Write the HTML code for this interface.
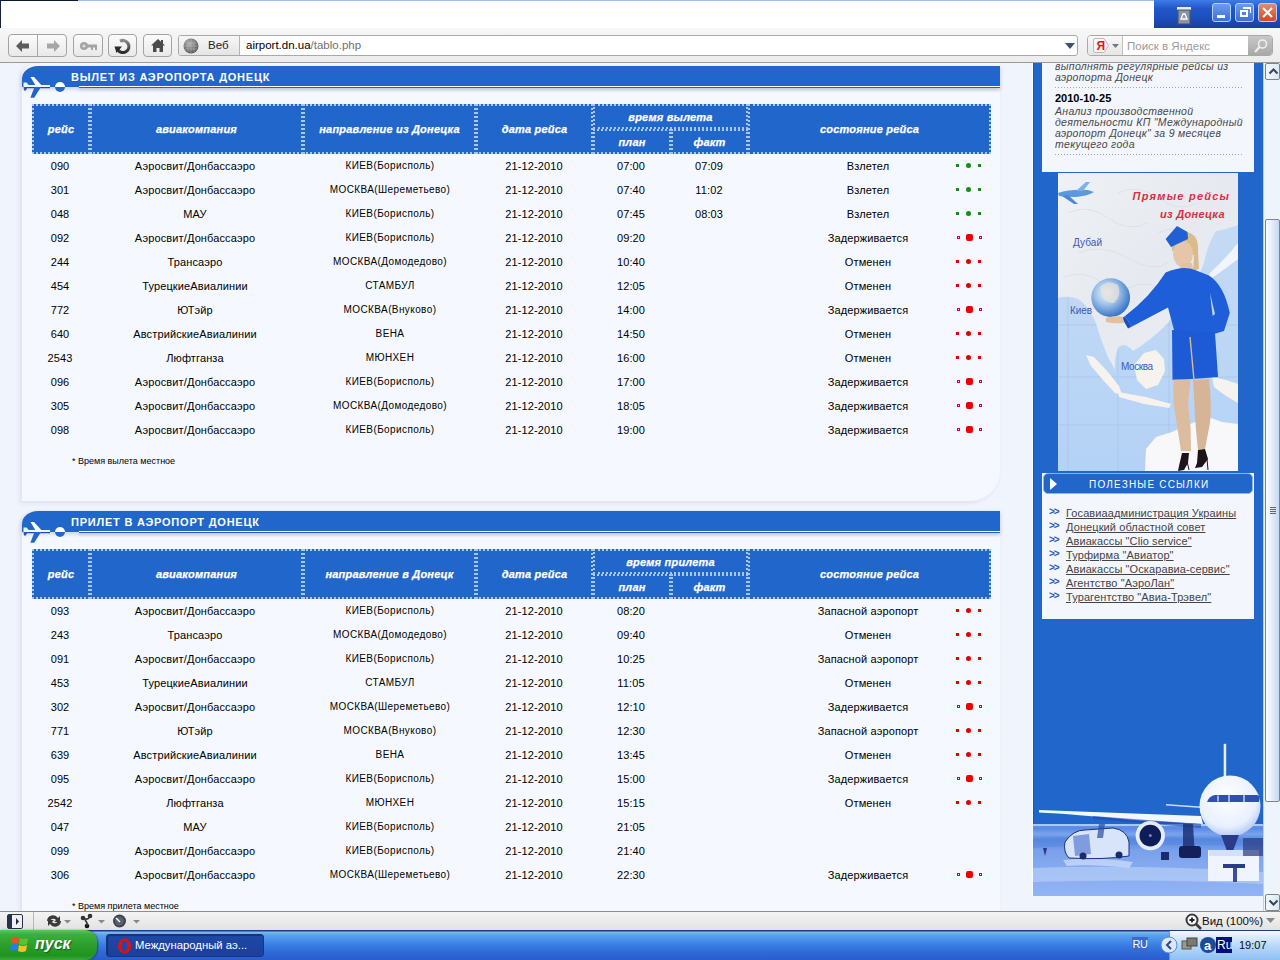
<!DOCTYPE html>
<html><head><meta charset="utf-8"><title>tablo</title><style>
*{margin:0;padding:0;box-sizing:border-box}
html,body{width:1280px;height:960px;overflow:hidden;background:#fff;font-family:"Liberation Sans",sans-serif;position:relative}
.abs{position:absolute}
/* title area */
#titlebar{position:absolute;left:0;top:0;width:1280px;height:28px;background:#fff}
#toolbar{position:absolute;left:0;top:28px;width:1280px;height:35px;background:linear-gradient(#f7f7f7,#ececec);border-bottom:1px solid #9a9a9a}
/* content */
#content{position:absolute;left:0;top:63px;width:1263px;height:848px;background:#f0f4fd;overflow:hidden}
.sec{position:absolute;left:0;width:1010px;height:440px}
.panel{position:absolute;left:22px;width:978px;background:#f5f9ff;box-shadow:-2px 2px 4px rgba(150,160,200,.22);border-top-left-radius:16px 13px}
.hbar{position:absolute;left:22px;top:0;width:978px;height:21px;background:#2166cb;border-top-left-radius:16px 13px;box-shadow:0 2px 4px rgba(120,130,160,.35)}
.hline{position:absolute;left:57px;right:0;top:20px;height:2px;background:linear-gradient(#fff 50%,#2a5cc0 50%);box-shadow:0 2px 3px rgba(120,130,160,.35)}
.htitle{position:absolute;left:49px;top:5px;color:#fff;font-weight:bold;font-size:11px;letter-spacing:0.78px;line-height:13px;white-space:nowrap}
.plane{position:absolute;left:-2px;top:-2px}
.th{position:absolute;left:32px;width:959px;height:50px;background:#2166cb}
.th .c{position:absolute;top:0;border:2px dotted #a8c6f2;display:flex;align-items:center;justify-content:center}
.th .c span{color:#fff;font-weight:bold;font-style:italic;font-size:11px;white-space:nowrap;-webkit-text-stroke:.25px #fff;letter-spacing:.2px}
.row{position:absolute;left:0;width:1000px;height:24px}
.t{position:absolute;top:0;width:200px;text-align:center;font-size:11px;line-height:24px;color:#000;white-space:nowrap;letter-spacing:.12px}
.t.sm{font-size:10px;letter-spacing:.4px}
.sq,.ci,.hq,.bq{position:absolute;display:block}
.sq{width:3px;height:3px;top:10px}
.ci{width:5px;height:5px;top:9px;border-radius:50%}
.g{background:#1a8a1a}
.r{background:#e00000}
.hq{width:3px;height:3px;top:10px;border:1px solid #d01010;background:#fff}
.bq{width:7px;height:7px;top:8px;background:#ee0000;border-radius:2px}
.note{position:absolute;left:72px;top:390px;font-size:9px;color:#000;white-space:nowrap}
/* sidebar */
#sidebar{position:absolute;left:1033px;top:0;width:230px;height:833px;background:#2166cb;box-shadow:inset 1px 0 0 #2a52a8,-1px 0 0 #f4ffff}
/* scrollbar */
#vscroll{position:absolute;left:1263px;top:63px;width:17px;height:848px;background:#eef4fb;border-left:1px solid #c5cfdc}
#status{position:absolute;left:0;top:911px;width:1280px;height:19px;background:linear-gradient(#f4f4f4,#e2e2e2);border-top:1px solid #8c8c8c}
#taskbar{position:absolute;left:0;top:930px;width:1280px;height:30px;background:linear-gradient(#1c3a8c 0px,#1c3a8c 1px,#7ebcf2 2px,#5aa2f0 5px,#4a90ea 10px,#3a7ee4 15px,#2f6ad8 22px,#2a5ccc 30px)}
/* chrome */
.btn{position:absolute;top:6px;height:23px;border:1px solid #a3a3a3;border-radius:4px;background:linear-gradient(#fbfbfb,#e9e9e9)}
.addr{position:absolute;left:178px;top:7px;width:900px;height:21px;border:1px solid #a8a8a8;border-radius:3px;background:#fff;overflow:hidden}
.addr .web{position:absolute;left:0;top:0;width:61px;height:19px;background:linear-gradient(#f7f7f7,#e4e4e4);border-right:1px solid #b5b5b5}
.addr .url{position:absolute;left:67px;top:3px;font-size:11.5px;line-height:13px;color:#000;white-space:nowrap}
.search{position:absolute;left:1087px;top:7px;width:186px;height:21px;border:1px solid #a8a8a8;border-radius:4px;background:#fff;overflow:hidden}
.xpbtn{position:absolute;top:3px;width:19px;height:19px;border:1px solid #b8d0f8;border-radius:3px}
.task{position:absolute;top:934px;left:106px;width:158px;height:23px;border-radius:3px;background:linear-gradient(#1e48a8,#1c3f9a);border:1px solid #163582;box-shadow:inset 1px 1px 1px rgba(0,0,0,.3)}
/* sidebar */
.news{position:absolute;left:9px;top:0;width:212px;height:109px;background:#f3f6fd}
.news .it{position:absolute;left:13px;font-size:10.5px;font-style:italic;color:#484848;line-height:11px;white-space:nowrap;letter-spacing:.3px}
.news .dt{position:absolute;left:13px;font-size:11px;font-weight:bold;color:#000;line-height:11px}
.news .dl{position:absolute;left:13px;width:189px;height:1px;background:repeating-linear-gradient(90deg,#a8a8a8 0 1px,transparent 1px 3px)}
.lnk{position:absolute;left:9px;top:410px;width:212px;height:146px;background:#f3f6fd}
.lhead{position:absolute;left:10px;top:410px;width:210px;height:21px;background:#2166cb;border:1px solid #8fb4ec;border-radius:5px}
.lhead span{position:absolute;left:45px;top:5px;color:#fff;font-size:10px;line-height:12px;letter-spacing:1.2px;white-space:nowrap}
.links a{position:absolute;left:33px;font-size:11px;line-height:12px;color:#444;text-decoration:underline;white-space:nowrap;letter-spacing:.1px}
.links b{position:absolute;left:16px;font-size:10px;line-height:10px;color:#2a5ac0;font-weight:bold;letter-spacing:-1px}
.sbtn{position:absolute;left:1px;width:15px;height:17px;border:1px solid #7c8494;border-radius:2px;background:linear-gradient(90deg,#f4f8fc,#dde8f4)}

</style></head><body>
<div id="titlebar">
  <div style="position:absolute;left:0;top:0;width:78px;height:1px;background:#101830"></div>
  <div style="position:absolute;left:78px;top:0;width:1076px;height:1px;background:#9fc0e8"></div>
  <div style="position:absolute;left:0;top:0;width:1px;height:28px;background:#182040"></div>
  <div style="position:absolute;left:1154px;top:0;width:126px;height:28px;background:linear-gradient(#3d7de8 0%,#2357c8 30%,#1d50c0 60%,#1b3f9c 100%)">
    <svg style="position:absolute;left:21px;top:4px" width="18" height="22" viewBox="0 0 18 22">
      <rect x="2" y="3" width="14" height="3" fill="#e8f0f0"/><rect x="3" y="6" width="12" height="14" fill="#8a94a6" stroke="#48525e" stroke-width="1"/>
      <path d="M6 15 L8 10 L10 10 L12 15 Z" fill="none" stroke="#fff" stroke-width="1.3"/>
    </svg>
    <div class="xpbtn" style="left:58px;background:linear-gradient(#6a9cf0,#3c6ed8)"><div style="position:absolute;left:4px;top:11px;width:8px;height:3px;background:#fff"></div></div>
    <div class="xpbtn" style="left:81px;background:linear-gradient(#6a9cf0,#3c6ed8)"><div style="position:absolute;left:4px;top:6px;width:8px;height:7px;border:2px solid #fff;border-top-width:2px"></div><div style="position:absolute;left:7px;top:3px;width:8px;height:6px;border:1px solid #fff;border-top-width:2px;border-left:0;border-bottom:0"></div></div>
    <div class="xpbtn" style="left:104px;background:linear-gradient(#e88a6a,#d04a20)"><svg style="position:absolute;left:3px;top:3px" width="11" height="11" viewBox="0 0 11 11"><path d="M1 1 L10 10 M10 1 L1 10" stroke="#fff" stroke-width="2"/></svg></div>
  </div>
</div>
<div id="toolbar">
  <div class="btn" style="left:8px;width:59px"><div style="position:absolute;left:28px;top:0;width:1px;height:21px;background:#a8a8a8"></div>
    <svg style="position:absolute;left:6px;top:4px" width="16" height="14" viewBox="0 0 16 14"><path d="M1 7 L7 1 L7 4.5 L14 4.5 L14 9.5 L7 9.5 L7 13 Z" fill="#5c5c5c"/></svg>
    <svg style="position:absolute;left:36px;top:4px" width="16" height="14" viewBox="0 0 16 14"><path d="M15 7 L9 1 L9 4.5 L2 4.5 L2 9.5 L9 9.5 L9 13 Z" fill="#a6a6a6"/></svg>
  </div>
  <div class="btn" style="left:73px;width:30px"><svg style="position:absolute;left:5px;top:5px" width="20" height="12" viewBox="0 0 20 12"><circle cx="5" cy="6" r="4" fill="#a4a4a4"/><circle cx="5" cy="6" r="1.5" fill="#e0e0e0"/><rect x="8" y="4.5" width="10" height="3" fill="#a4a4a4"/><rect x="12" y="7" width="2" height="3" fill="#a4a4a4"/><rect x="16" y="7" width="2" height="3" fill="#a4a4a4"/></svg></div>
  <div class="btn" style="left:108px;width:29px"><svg style="position:absolute;left:4px;top:2px" width="20" height="18" viewBox="0 0 20 18"><defs><linearGradient id="rl" x1="0" y1="0" x2="0" y2="1"><stop offset="0" stop-color="#8a8a8a"/><stop offset="1" stop-color="#2a2a2a"/></linearGradient></defs><path d="M7 4.2 A6 6 0 1 1 5 13" fill="none" stroke="url(#rl)" stroke-width="3.2"/><path d="M1.5 9.5 L9 9.5 L3.5 16 Z" fill="#2a2a2a"/></svg></div>
  <div class="btn" style="left:143px;width:29px"><svg style="position:absolute;left:6px;top:3px" width="16" height="15" viewBox="0 0 16 15"><path d="M8 1 L15 7.5 L13 7.5 L13 14 L9.5 14 L9.5 10 L6.5 10 L6.5 14 L3 14 L3 7.5 L1 7.5 Z" fill="#4a4a4a"/><rect x="11" y="2" width="2" height="4" fill="#4a4a4a"/></svg></div>
  <div class="addr"><div class="web"><svg style="position:absolute;left:4px;top:2px" width="16" height="16" viewBox="0 0 16 16"><defs><radialGradient id="gl" cx="40%" cy="35%" r="65%"><stop offset="0" stop-color="#b0b0b0"/><stop offset="1" stop-color="#5a5a5a"/></radialGradient></defs><circle cx="8" cy="8" r="7.5" fill="url(#gl)"/><path d="M8 1 V15 M1 8 H15 M5 2 V14 M11 2 V14 M2 5 H14 M2 11 H14" stroke="#c8c8c8" stroke-width=".6" opacity=".7"/></svg><span style="position:absolute;left:29px;top:3px;font-size:11.5px;line-height:13px;color:#222">Веб</span></div>
    <span class="url">airport.dn.ua<span style="color:#707070">/tablo.php</span></span>
    <svg style="position:absolute;left:886px;top:7px" width="10" height="6" viewBox="0 0 10 6"><path d="M0 0 H10 L5 6 Z" fill="#405070"/></svg>
  </div>
  <div class="search"><div style="position:absolute;left:0;top:0;width:35px;height:19px;background:linear-gradient(#f8f8f8,#e6e6e6);border-right:1px solid #c0c0c0">
     <svg style="position:absolute;left:3px;top:1px" width="30" height="17" viewBox="0 0 30 17"><path d="M2.5 3 Q2.5 1.5 4 1.5 L13 1.5 L17.5 8.5 L13 15.5 L4 15.5 Q2.5 15.5 2.5 14 Z" fill="#fbf6f6" stroke="#c8b4b4" stroke-width="1"/><text x="5.5" y="13" font-family="Liberation Sans" font-size="12" font-weight="bold" fill="#d81818">Я</text><path d="M21 7 H28 L24.5 11 Z" fill="#6a7a90"/></svg></div>
    <span style="position:absolute;left:39px;top:4px;font-size:11.5px;line-height:13px;color:#9a9a9a">Поиск в Яндекс</span>
    <div style="position:absolute;left:160px;top:0;width:26px;height:19px;background:linear-gradient(#c8c8c8,#a8a8a8)"><svg style="position:absolute;left:5px;top:2px" width="16" height="16" viewBox="0 0 16 16"><circle cx="9.5" cy="6" r="4" fill="none" stroke="#eee" stroke-width="1.6"/><path d="M6.5 9 L2 14" stroke="#eee" stroke-width="2.2"/></svg></div>
  </div>
</div>
<div id="content">
  <div class="panel" style="top:0;height:438px;border-bottom-right-radius:30px"></div>
  <div class="panel" style="top:448px;height:400px"></div>
  <div style="position:absolute;left:0;top:-63px">
<div class="sec" style="top:66px">
<div class="hbar"><span class="htitle">ВЫЛЕТ ИЗ АЭРОПОРТА ДОНЕЦК</span><div class="hline"></div><svg class="plane" width="60" height="40" viewBox="20 64 60 40"><path d="M30.5 77 L34 77 L41.5 85.2 L35.5 85.2 Z" fill="#fff"/><path d="M23.5 82.5 L26.5 82.5 L29 85.2 L23.5 85.2 Z" fill="#e8f4ff"/><rect x="23.5" y="85" width="26.5" height="2" fill="#eef8ff"/><rect x="24" y="87" width="26" height="1.2" fill="#1d4ab8"/><path d="M34.5 87 L41 87 L34.2 97.8 L30.4 97.8 Z" fill="#2166cb"/><path d="M23.6 87 L27.5 87 L26 90.6 L24 90.6 Z" fill="#2a50c0"/><circle cx="60" cy="87" r="5" fill="#fff"/><path d="M55 87 A5 5 0 0 0 65 87 Z" fill="#2166cb"/></svg></div>
<div class="th" style="top:38px">
<div class="c" style="left:0;width:58px;height:50px"><span>рейс</span></div>
<div class="c" style="left:58px;width:213px;height:50px"><span>авиакомпания</span></div>
<div class="c" style="left:271px;width:173px;height:50px"><span>направление из Донецка</span></div>
<div class="c" style="left:444px;width:117px;height:50px"><span>дата рейса</span></div>
<div class="c" style="left:561px;width:155px;height:25px"><span>время вылета</span></div>
<div class="c" style="left:561px;top:25px;width:78px;height:25px"><span>план</span></div>
<div class="c" style="left:639px;top:25px;width:77px;height:25px"><span>факт</span></div>
<div class="c" style="left:716px;width:243px;height:50px"><span>состояние рейса</span></div>
</div>
<div class="row" style="top:88px">
<span class="t" style="left:-40px">090</span>
<span class="t" style="left:95px">Аэросвит/Донбассаэро</span>
<span class="t sm" style="left:290px">КИЕВ(Борисполь)</span>
<span class="t" style="left:434px">21-12-2010</span>
<span class="t" style="left:531px">07:00</span>
<span class="t" style="left:609px">07:09</span>
<span class="t" style="left:768px">Взлетел</span>
<i class="sq g" style="left:956px"></i><i class="ci g" style="left:966px"></i><i class="sq g" style="left:978px"></i>
</div>
<div class="row" style="top:112px">
<span class="t" style="left:-40px">301</span>
<span class="t" style="left:95px">Аэросвит/Донбассаэро</span>
<span class="t sm" style="left:290px">МОСКВА(Шереметьево)</span>
<span class="t" style="left:434px">21-12-2010</span>
<span class="t" style="left:531px">07:40</span>
<span class="t" style="left:609px">11:02</span>
<span class="t" style="left:768px">Взлетел</span>
<i class="sq g" style="left:956px"></i><i class="ci g" style="left:966px"></i><i class="sq g" style="left:978px"></i>
</div>
<div class="row" style="top:136px">
<span class="t" style="left:-40px">048</span>
<span class="t" style="left:95px">МАУ</span>
<span class="t sm" style="left:290px">КИЕВ(Борисполь)</span>
<span class="t" style="left:434px">21-12-2010</span>
<span class="t" style="left:531px">07:45</span>
<span class="t" style="left:609px">08:03</span>
<span class="t" style="left:768px">Взлетел</span>
<i class="sq g" style="left:956px"></i><i class="ci g" style="left:966px"></i><i class="sq g" style="left:978px"></i>
</div>
<div class="row" style="top:160px">
<span class="t" style="left:-40px">092</span>
<span class="t" style="left:95px">Аэросвит/Донбассаэро</span>
<span class="t sm" style="left:290px">КИЕВ(Борисполь)</span>
<span class="t" style="left:434px">21-12-2010</span>
<span class="t" style="left:531px">09:20</span>
<span class="t" style="left:768px">Задерживается</span>
<i class="hq" style="left:957px"></i><i class="bq" style="left:966px"></i><i class="hq" style="left:979px"></i>
</div>
<div class="row" style="top:184px">
<span class="t" style="left:-40px">244</span>
<span class="t" style="left:95px">Трансаэро</span>
<span class="t sm" style="left:290px">МОСКВА(Домодедово)</span>
<span class="t" style="left:434px">21-12-2010</span>
<span class="t" style="left:531px">10:40</span>
<span class="t" style="left:768px">Отменен</span>
<i class="sq r" style="left:956px"></i><i class="ci r" style="left:966px"></i><i class="sq r" style="left:978px"></i>
</div>
<div class="row" style="top:208px">
<span class="t" style="left:-40px">454</span>
<span class="t" style="left:95px">ТурецкиеАвиалинии</span>
<span class="t sm" style="left:290px">СТАМБУЛ</span>
<span class="t" style="left:434px">21-12-2010</span>
<span class="t" style="left:531px">12:05</span>
<span class="t" style="left:768px">Отменен</span>
<i class="sq r" style="left:956px"></i><i class="ci r" style="left:966px"></i><i class="sq r" style="left:978px"></i>
</div>
<div class="row" style="top:232px">
<span class="t" style="left:-40px">772</span>
<span class="t" style="left:95px">ЮТэйр</span>
<span class="t sm" style="left:290px">МОСКВА(Внуково)</span>
<span class="t" style="left:434px">21-12-2010</span>
<span class="t" style="left:531px">14:00</span>
<span class="t" style="left:768px">Задерживается</span>
<i class="hq" style="left:957px"></i><i class="bq" style="left:966px"></i><i class="hq" style="left:979px"></i>
</div>
<div class="row" style="top:256px">
<span class="t" style="left:-40px">640</span>
<span class="t" style="left:95px">АвстрийскиеАвиалинии</span>
<span class="t sm" style="left:290px">ВЕНА</span>
<span class="t" style="left:434px">21-12-2010</span>
<span class="t" style="left:531px">14:50</span>
<span class="t" style="left:768px">Отменен</span>
<i class="sq r" style="left:956px"></i><i class="ci r" style="left:966px"></i><i class="sq r" style="left:978px"></i>
</div>
<div class="row" style="top:280px">
<span class="t" style="left:-40px">2543</span>
<span class="t" style="left:95px">Люфтганза</span>
<span class="t sm" style="left:290px">МЮНХЕН</span>
<span class="t" style="left:434px">21-12-2010</span>
<span class="t" style="left:531px">16:00</span>
<span class="t" style="left:768px">Отменен</span>
<i class="sq r" style="left:956px"></i><i class="ci r" style="left:966px"></i><i class="sq r" style="left:978px"></i>
</div>
<div class="row" style="top:304px">
<span class="t" style="left:-40px">096</span>
<span class="t" style="left:95px">Аэросвит/Донбассаэро</span>
<span class="t sm" style="left:290px">КИЕВ(Борисполь)</span>
<span class="t" style="left:434px">21-12-2010</span>
<span class="t" style="left:531px">17:00</span>
<span class="t" style="left:768px">Задерживается</span>
<i class="hq" style="left:957px"></i><i class="bq" style="left:966px"></i><i class="hq" style="left:979px"></i>
</div>
<div class="row" style="top:328px">
<span class="t" style="left:-40px">305</span>
<span class="t" style="left:95px">Аэросвит/Донбассаэро</span>
<span class="t sm" style="left:290px">МОСКВА(Домодедово)</span>
<span class="t" style="left:434px">21-12-2010</span>
<span class="t" style="left:531px">18:05</span>
<span class="t" style="left:768px">Задерживается</span>
<i class="hq" style="left:957px"></i><i class="bq" style="left:966px"></i><i class="hq" style="left:979px"></i>
</div>
<div class="row" style="top:352px">
<span class="t" style="left:-40px">098</span>
<span class="t" style="left:95px">Аэросвит/Донбассаэро</span>
<span class="t sm" style="left:290px">КИЕВ(Борисполь)</span>
<span class="t" style="left:434px">21-12-2010</span>
<span class="t" style="left:531px">19:00</span>
<span class="t" style="left:768px">Задерживается</span>
<i class="hq" style="left:957px"></i><i class="bq" style="left:966px"></i><i class="hq" style="left:979px"></i>
</div>
<div class="note">* Время вылета местное</div>
</div>
<div class="sec" style="top:511px">
<div class="hbar"><span class="htitle">ПРИЛЕТ В АЭРОПОРТ ДОНЕЦК</span><div class="hline"></div><svg class="plane" width="60" height="40" viewBox="20 64 60 40"><path d="M30.5 77 L34 77 L41.5 85.2 L35.5 85.2 Z" fill="#fff"/><path d="M23.5 82.5 L26.5 82.5 L29 85.2 L23.5 85.2 Z" fill="#e8f4ff"/><rect x="23.5" y="85" width="26.5" height="2" fill="#eef8ff"/><rect x="24" y="87" width="26" height="1.2" fill="#1d4ab8"/><path d="M34.5 87 L41 87 L34.2 97.8 L30.4 97.8 Z" fill="#2166cb"/><path d="M23.6 87 L27.5 87 L26 90.6 L24 90.6 Z" fill="#2a50c0"/><circle cx="60" cy="87" r="5" fill="#fff"/><path d="M55 87 A5 5 0 0 0 65 87 Z" fill="#2166cb"/></svg></div>
<div class="th" style="top:38px">
<div class="c" style="left:0;width:58px;height:50px"><span>рейс</span></div>
<div class="c" style="left:58px;width:213px;height:50px"><span>авиакомпания</span></div>
<div class="c" style="left:271px;width:173px;height:50px"><span>направление в Донецк</span></div>
<div class="c" style="left:444px;width:117px;height:50px"><span>дата рейса</span></div>
<div class="c" style="left:561px;width:155px;height:25px"><span>время прилета</span></div>
<div class="c" style="left:561px;top:25px;width:78px;height:25px"><span>план</span></div>
<div class="c" style="left:639px;top:25px;width:77px;height:25px"><span>факт</span></div>
<div class="c" style="left:716px;width:243px;height:50px"><span>состояние рейса</span></div>
</div>
<div class="row" style="top:88px">
<span class="t" style="left:-40px">093</span>
<span class="t" style="left:95px">Аэросвит/Донбассаэро</span>
<span class="t sm" style="left:290px">КИЕВ(Борисполь)</span>
<span class="t" style="left:434px">21-12-2010</span>
<span class="t" style="left:531px">08:20</span>
<span class="t" style="left:768px">Запасной аэропорт</span>
<i class="sq r" style="left:956px"></i><i class="ci r" style="left:966px"></i><i class="sq r" style="left:978px"></i>
</div>
<div class="row" style="top:112px">
<span class="t" style="left:-40px">243</span>
<span class="t" style="left:95px">Трансаэро</span>
<span class="t sm" style="left:290px">МОСКВА(Домодедово)</span>
<span class="t" style="left:434px">21-12-2010</span>
<span class="t" style="left:531px">09:40</span>
<span class="t" style="left:768px">Отменен</span>
<i class="sq r" style="left:956px"></i><i class="ci r" style="left:966px"></i><i class="sq r" style="left:978px"></i>
</div>
<div class="row" style="top:136px">
<span class="t" style="left:-40px">091</span>
<span class="t" style="left:95px">Аэросвит/Донбассаэро</span>
<span class="t sm" style="left:290px">КИЕВ(Борисполь)</span>
<span class="t" style="left:434px">21-12-2010</span>
<span class="t" style="left:531px">10:25</span>
<span class="t" style="left:768px">Запасной аэропорт</span>
<i class="sq r" style="left:956px"></i><i class="ci r" style="left:966px"></i><i class="sq r" style="left:978px"></i>
</div>
<div class="row" style="top:160px">
<span class="t" style="left:-40px">453</span>
<span class="t" style="left:95px">ТурецкиеАвиалинии</span>
<span class="t sm" style="left:290px">СТАМБУЛ</span>
<span class="t" style="left:434px">21-12-2010</span>
<span class="t" style="left:531px">11:05</span>
<span class="t" style="left:768px">Отменен</span>
<i class="sq r" style="left:956px"></i><i class="ci r" style="left:966px"></i><i class="sq r" style="left:978px"></i>
</div>
<div class="row" style="top:184px">
<span class="t" style="left:-40px">302</span>
<span class="t" style="left:95px">Аэросвит/Донбассаэро</span>
<span class="t sm" style="left:290px">МОСКВА(Шереметьево)</span>
<span class="t" style="left:434px">21-12-2010</span>
<span class="t" style="left:531px">12:10</span>
<span class="t" style="left:768px">Задерживается</span>
<i class="hq" style="left:957px"></i><i class="bq" style="left:966px"></i><i class="hq" style="left:979px"></i>
</div>
<div class="row" style="top:208px">
<span class="t" style="left:-40px">771</span>
<span class="t" style="left:95px">ЮТэйр</span>
<span class="t sm" style="left:290px">МОСКВА(Внуково)</span>
<span class="t" style="left:434px">21-12-2010</span>
<span class="t" style="left:531px">12:30</span>
<span class="t" style="left:768px">Запасной аэропорт</span>
<i class="sq r" style="left:956px"></i><i class="ci r" style="left:966px"></i><i class="sq r" style="left:978px"></i>
</div>
<div class="row" style="top:232px">
<span class="t" style="left:-40px">639</span>
<span class="t" style="left:95px">АвстрийскиеАвиалинии</span>
<span class="t sm" style="left:290px">ВЕНА</span>
<span class="t" style="left:434px">21-12-2010</span>
<span class="t" style="left:531px">13:45</span>
<span class="t" style="left:768px">Отменен</span>
<i class="sq r" style="left:956px"></i><i class="ci r" style="left:966px"></i><i class="sq r" style="left:978px"></i>
</div>
<div class="row" style="top:256px">
<span class="t" style="left:-40px">095</span>
<span class="t" style="left:95px">Аэросвит/Донбассаэро</span>
<span class="t sm" style="left:290px">КИЕВ(Борисполь)</span>
<span class="t" style="left:434px">21-12-2010</span>
<span class="t" style="left:531px">15:00</span>
<span class="t" style="left:768px">Задерживается</span>
<i class="hq" style="left:957px"></i><i class="bq" style="left:966px"></i><i class="hq" style="left:979px"></i>
</div>
<div class="row" style="top:280px">
<span class="t" style="left:-40px">2542</span>
<span class="t" style="left:95px">Люфтганза</span>
<span class="t sm" style="left:290px">МЮНХЕН</span>
<span class="t" style="left:434px">21-12-2010</span>
<span class="t" style="left:531px">15:15</span>
<span class="t" style="left:768px">Отменен</span>
<i class="sq r" style="left:956px"></i><i class="ci r" style="left:966px"></i><i class="sq r" style="left:978px"></i>
</div>
<div class="row" style="top:304px">
<span class="t" style="left:-40px">047</span>
<span class="t" style="left:95px">МАУ</span>
<span class="t sm" style="left:290px">КИЕВ(Борисполь)</span>
<span class="t" style="left:434px">21-12-2010</span>
<span class="t" style="left:531px">21:05</span>

</div>
<div class="row" style="top:328px">
<span class="t" style="left:-40px">099</span>
<span class="t" style="left:95px">Аэросвит/Донбассаэро</span>
<span class="t sm" style="left:290px">КИЕВ(Борисполь)</span>
<span class="t" style="left:434px">21-12-2010</span>
<span class="t" style="left:531px">21:40</span>

</div>
<div class="row" style="top:352px">
<span class="t" style="left:-40px">306</span>
<span class="t" style="left:95px">Аэросвит/Донбассаэро</span>
<span class="t sm" style="left:290px">МОСКВА(Шереметьево)</span>
<span class="t" style="left:434px">21-12-2010</span>
<span class="t" style="left:531px">22:30</span>
<span class="t" style="left:768px">Задерживается</span>
<i class="hq" style="left:957px"></i><i class="bq" style="left:966px"></i><i class="hq" style="left:979px"></i>
</div>
<div class="note">* Время прилета местное</div>
</div>
  </div>
  <div id="sidebar">
  <div class="news">
    <div class="it" style="top:-2px">выполнять регулярные рейсы из</div>
    <div class="it" style="top:9px">аэропорта Донецк</div>
    <div class="dl" style="top:24px"></div>
    <div class="dt" style="top:30px">2010-10-25</div>
    <div class="it" style="top:43px">Анализ производственной</div>
    <div class="it" style="top:54px">деятельности КП "Международный</div>
    <div class="it" style="top:65px">аэропорт Донецк" за 9 месяцев</div>
    <div class="it" style="top:76px">текущего года</div>
    <div class="dl" style="top:91px"></div>
  </div>
  <svg style="position:absolute;left:25px;top:110px" width="180" height="298" viewBox="0 0 180 298">
    <defs>
      <linearGradient id="sea" x1="0" y1="0" x2="0" y2="1"><stop offset="0" stop-color="#c8dcf4"/><stop offset="1" stop-color="#b4d2f6"/></linearGradient>
      <radialGradient id="glb" cx="40%" cy="38%" r="62%"><stop offset="0" stop-color="#f0f4f8"/><stop offset=".45" stop-color="#a8c8ec"/><stop offset="1" stop-color="#3a78c8"/></radialGradient>
      <linearGradient id="land" x1="0" y1="0" x2="1" y2="1"><stop offset="0" stop-color="#eef1f5"/><stop offset=".5" stop-color="#e6eaf0"/><stop offset="1" stop-color="#eceff4"/></linearGradient>
    </defs>
    <rect width="180" height="298" fill="url(#sea)"/>
    <path d="M0 152 H180 M0 204 H180 M0 252 H180 M60 0 V298 M111 0 V298 M10 120 V298" stroke="#9ebce0" stroke-width=".7" opacity=".6"/>
    <path d="M0 0 H180 V52 Q170 56 158 58 Q150 70 146 90 Q138 112 122 130 L110 150 Q92 168 75 178 Q66 168 60 175 Q56 186 57 197 L50 184 Q42 165 38 150 Q30 132 20 126 Q10 122 0 125 Z" fill="url(#land)"/>
    <path d="M10 40 Q30 30 50 45 T90 50 M20 80 Q45 70 70 85 T110 90 M60 20 Q80 10 100 25 T140 30 M5 105 Q25 95 45 110 M70 115 Q90 105 110 120 M100 60 Q120 50 140 65" stroke="#d6dbe2" stroke-width="1" fill="none" opacity=".6"/>
    <path d="M180 70 Q168 85 152 100 L146 110 Q162 100 180 86 Z" fill="#f2f5f9"/>
    <path d="M28 182 L36 184 L50 199 L61 213 L64 222 L57 220 L45 207 L33 193 Z" fill="#f6f2ee"/>
    <path d="M76 192 L86 180 L98 177 L106 186 L107 198 L100 212 L88 216 L79 207 Z" fill="#f6f2ee"/>
    <path d="M60 219 L88 224 L113 231 L111 235 L86 231 L61 224 Z" fill="#f6f2ee"/>
    <path d="M154 204 L168 207 L180 211 L180 230 L168 223 L156 214 Z" fill="#f4f3f0"/>
    <path d="M87 298 L88 276 L98 264 L114 259 L132 251 L150 244 L164 249 L180 251 V298 Z" fill="#f8f8fa"/>
    <g transform="translate(0,8)"><path d="M0 12 Q12 8 30 9 L36 11 Q30 15 18 16 Q8 16 1 15 Z" fill="#5a98e0"/><path d="M18 10 L28 1 L32 1 L25 10 Z" fill="#7ab0ec"/><path d="M10 14 L20 23 L16 23 L4 15 Z" fill="#4a88d8"/></g>
    <text x="74.5" y="27" textLength="96.5" lengthAdjust="spacing" font-family="Liberation Sans" font-style="italic" font-weight="bold" font-size="11" fill="#d83040">Прямые рейсы</text>
    <text x="102" y="45" textLength="64.5" lengthAdjust="spacing" font-family="Liberation Sans" font-style="italic" font-weight="bold" font-size="11" fill="#d83040">из Донецка</text>
    <text x="15" y="73" textLength="29" lengthAdjust="spacing" font-family="Liberation Sans" font-size="10" fill="#3a58b8">Дубай</text>
    <text x="12" y="141" textLength="22" lengthAdjust="spacing" font-family="Liberation Sans" font-size="10" fill="#3a58b8">Киев</text>
    <text x="63" y="197" textLength="32" lengthAdjust="spacing" font-family="Liberation Sans" font-size="10" fill="#3a58b8">Москва</text>
    <circle cx="52.7" cy="124.6" r="19.4" fill="url(#glb)"/>
    <path d="M42 114 Q50 106 60 112 Q64 122 56 130 Q48 130 44 124 Z" fill="#e6e2dc" opacity=".75"/>
    <!-- figure -->
    <path d="M114 78 Q112 60 127 59 Q141 60 140 78 L141 96 L135 98 L136 82 Z" fill="#d8bc8c"/>
    <ellipse cx="125" cy="81" rx="10" ry="13" fill="#e6c6a8"/>
    <path d="M107.6 66 L119 53 L129.5 59 L130 66 L113 74 Z" fill="#2060d4"/>
    <path d="M122 90 L134 90 L136 101 L123 103 Z" fill="#e2c2a2"/>
    <path d="M107.6 99.5 Q125 92 137 97 L151 102.4 Q166 112 171.8 140 L166 158 L156 161 L146 150 L157 141 L152 120 L157 163.7 L117.8 163.7 L110 134.5 L74 153.5 L66.8 143.3 Q92 124 107.6 99.5 Z" fill="#1e5ed8"/>
    <path d="M66.8 143.3 L74 153.5 L70 155.5 L64 145 Z" fill="#1a50c0"/>
    <path d="M47.8 145 Q56 142 65 144 L66 150 Q56 151 48 149 Z" fill="#e2c0a0"/>
    <path d="M114 157 L157 160 L160 204 Q138 206 114.5 207 Z" fill="#1c5ad6"/>
    <path d="M132 164 L136 207" stroke="#d8bc94" stroke-width="1.4"/>
    <path d="M115.4 206.5 L132.6 207 L130 230 L132.6 255 L133 278 L123 278 L118.6 250 L115.5 230 Z" fill="#dcbc9e"/>
    <path d="M135 207 L151 206 Q154 232 152 250 L147 276 L140 277 Q137 250 136.5 232 Z" fill="#d6b496"/>
    <path d="M124 280 L131 280 L130 290 L126 297 L120 298 L121 293 Z" fill="#1c1418"/><path d="M129 288 L131 297" stroke="#1c1418" stroke-width="1"/>
    <path d="M140 277 L147 276 L150 286 L144 294 L137 295 L139 290 Z" fill="#1c1418"/>
    <path d="M149 286 L150 297" stroke="#1c1418" stroke-width="1"/>
  </svg>
  <div class="lnk"></div>
  <div class="lhead"><svg style="position:absolute;left:6px;top:4px" width="8" height="12" viewBox="0 0 8 12"><path d="M0 0 L7 6 L0 12 Z" fill="#fff"/></svg><span>ПОЛЕЗНЫЕ ССЫЛКИ</span></div>
  <div class="links">
    <b style="top:444px">&gt;&gt;</b><a style="top:444px">Госавиаадминистрация Украины</a>
    <b style="top:458px">&gt;&gt;</b><a style="top:458px">Донецкий областной совет</a>
    <b style="top:472px">&gt;&gt;</b><a style="top:472px">Авиакассы "Clio service"</a>
    <b style="top:486px">&gt;&gt;</b><a style="top:486px">Турфирма "Авиатор"</a>
    <b style="top:500px">&gt;&gt;</b><a style="top:500px">Авиакассы "Оскаравиа-сервис"</a>
    <b style="top:514px">&gt;&gt;</b><a style="top:514px">Агентство "АэроЛан"</a>
    <b style="top:528px">&gt;&gt;</b><a style="top:528px">Турагентство "Авиа-Трэвел"</a>
  </div>
  <svg style="position:absolute;left:0;top:675px" width="230" height="158" viewBox="0 0 230 158">
    <defs>
      <linearGradient id="grd" x1="0" y1="0" x2="0" y2="1"><stop offset="0" stop-color="#6a9ae8"/><stop offset=".06" stop-color="#5a8ae4"/><stop offset=".14" stop-color="#7aa4ec"/><stop offset=".22" stop-color="#5288e2"/><stop offset=".36" stop-color="#78a0ec"/><stop offset=".6" stop-color="#86aaf0"/><stop offset="1" stop-color="#90b4f4"/></linearGradient>
      <radialGradient id="nose" cx="45%" cy="35%" r="70%"><stop offset="0" stop-color="#ffffff"/><stop offset=".7" stop-color="#e8f0fe"/><stop offset="1" stop-color="#a8c0f0"/></radialGradient>
    </defs>
    <rect x="0" y="86" width="230" height="72" fill="url(#grd)"/>
    <rect x="0" y="86" width="230" height="2" fill="#a8c8f8"/>
    <path d="M0 100 Q80 96 230 102 L230 108 Q80 104 0 110 Z" fill="#5a86dc" opacity=".5"/>
    <path d="M0 130 Q100 126 230 134 L230 146 Q120 140 0 144 Z" fill="#b4cdf6" opacity=".7"/>
    <path d="M30 122 Q60 118 100 124 L96 130 Q60 126 34 128 Z" fill="#c8dafa" opacity=".8"/>
    <path d="M6 72 L168 78 L170 86 L100 82 Q40 76 6 74.5 Z" fill="#f2f6ff"/>
    <path d="M60 78 L168 86 L168 90 L60 81 Z" fill="#1e48b0" opacity=".6"/>
    <path d="M133 66 L168 68.5 L168 70 L133 67.5 Z" fill="#c8dcfc"/>
    <rect x="190.7" y="5.8" width="2.5" height="33" fill="#e8f0ff"/>
    <ellipse cx="197" cy="68" rx="30.5" ry="30.5" fill="url(#nose)"/>
    <path d="M174 64 Q176 58 182 57 L224 57 Q228 58 226 64 Z" fill="#3050b0"/>
    <path d="M185 57.5 V63.5 M196 57 V64 M211 57 V64" stroke="#e8f0ff" stroke-width="1.2"/>
    <circle cx="117.3" cy="97.6" r="14.7" fill="#e4ecfc"/>
    <circle cx="117.3" cy="97.6" r="10.8" fill="#0e1c58"/>
    <circle cx="117.3" cy="97.6" r="1.5" fill="#6a8ad0"/>
    <path d="M150 86 L160 86 L162 120 L150 120 Z" fill="#1a2a70" opacity=".8"/>
    <rect x="146" y="108" width="22" height="12" rx="3" fill="#14205a"/>
    <path d="M188 97 L206 97 L200 113 L194 113 Z" fill="#2a3c88"/>
    <path d="M32 104 Q40 92 52 92 L80 90 Q94 92 96 104 L96 118 Q70 122 36 120 Q30 114 32 104 Z" fill="#d8e4fa" stroke="#1a3080" stroke-width="1"/>
    <path d="M40 98 L56 96 L58 116 L42 118 Z" fill="#6a8ad8" opacity=".8"/>
    <circle cx="50" cy="118" r="3.5" fill="#1a2a6a"/><circle cx="86" cy="117" r="3.5" fill="#1a2a6a"/>
    <path d="M66 86 L72 86 L70 100 L64 100 Z" fill="#2a4aa0" opacity=".7"/>
    <rect x="175" y="112" width="51" height="31" fill="#f0f4ff"/>
    <rect x="176" y="112" width="50" height="6" fill="#d4e0fa"/>
    <rect x="190" y="126" width="22" height="4" fill="#2a3c88"/>
    <rect x="200" y="130" width="4" height="14" fill="#3a4ca0"/>
    <path d="M210 100 L232 100 L232 118 L210 118 Z" fill="#2a3a80" opacity=".7"/>
    <path d="M10 110 L14 110 L12 118 Z" fill="#2a3a80"/>
    <rect x="128" y="114" width="8" height="8" fill="#1a2a70"/>
  </svg>
</div>
</div>
<div id="vscroll">
  <div class="sbtn" style="top:0"><svg style="position:absolute;left:2px;top:3px" width="11" height="8" viewBox="0 0 11 8"><path d="M1.5 6.5 L5.5 2.5 L9.5 6.5" fill="none" stroke="#3a4458" stroke-width="2"/></svg></div>
  <div style="position:absolute;left:1px;top:156px;width:15px;height:583px;border:1px solid #7c8494;border-radius:2px;background:linear-gradient(90deg,#fcfdff 0%,#e8f0fa 40%,#c4d8f2 100%)">
    <div style="position:absolute;left:4px;top:287px;width:6px;height:1px;background:#666;box-shadow:0 2px 0 #666,0 4px 0 #666,0 6px 0 #666"></div>
  </div>
  <div class="sbtn" style="top:831px"><svg style="position:absolute;left:2px;top:4px" width="11" height="8" viewBox="0 0 11 8"><path d="M1.5 1.5 L5.5 5.5 L9.5 1.5" fill="none" stroke="#3a4458" stroke-width="2"/></svg></div>
</div>
<div id="status">
  <svg style="position:absolute;left:7px;top:2px" width="16" height="15" viewBox="0 0 16 15"><rect x=".5" y=".5" width="15" height="14" rx="1.5" fill="#eef0f4" stroke="#283048"/><rect x="1" y="1" width="4" height="13" fill="#283050"/><path d="M9 4 L12 7.5 L9 11 Z" fill="#202838"/></svg>
  <div style="position:absolute;left:33px;top:0;width:1px;height:18px;background:#b8b8b8"></div>
  <svg style="position:absolute;left:44px;top:1px" width="28" height="16" viewBox="0 0 28 16"><path d="M3 8 A6 6 0 0 1 14 5 L16 3 L16 9 L10 9 L12 7 A3.5 3.5 0 0 0 6 8 Z" fill="#3a3a3a"/><path d="M17 8 A6 6 0 0 1 6 11 L4 13 L4 7 L10 7 L8 9 A3.5 3.5 0 0 0 14 8 Z" fill="#3a3a3a"/><path d="M20 7 H27 L23.5 10.5 Z" fill="#888"/></svg>
  <svg style="position:absolute;left:79px;top:1px" width="28" height="16" viewBox="0 0 28 16"><circle cx="4" cy="5" r="2.3" fill="#333"/><circle cx="11" cy="3" r="2.3" fill="#333"/><circle cx="8" cy="13" r="2.3" fill="#111"/><path d="M4 5 Q9 8 11 3 M6 7 Q9 10 8 13" stroke="#333" stroke-width="1.6" fill="none"/><path d="M19 7 H26 L22.5 10.5 Z" fill="#888"/></svg>
  <svg style="position:absolute;left:112px;top:1px" width="32" height="16" viewBox="0 0 32 16"><circle cx="7.5" cy="8" r="6.5" fill="#3c4250"/><circle cx="7.5" cy="8" r="4.5" fill="#5a6070"/><path d="M4 5 L8 9" stroke="#fff" stroke-width="1.4"/><path d="M21 7 H28 L24.5 10.5 Z" fill="#888"/></svg>
  <svg style="position:absolute;left:1185px;top:1px" width="18" height="17" viewBox="0 0 18 17"><circle cx="7" cy="7" r="5.5" fill="#fff" stroke="#3a3a40" stroke-width="2"/><path d="M4.5 7 H9.5 M7 4.5 V9.5" stroke="#222" stroke-width="1.8"/><path d="M11 11 L16 16" stroke="#3a3a40" stroke-width="2.6"/></svg>
  <span style="position:absolute;left:1202px;top:3px;font-size:11.5px;line-height:13px;color:#111;white-space:nowrap">Вид (100%)</span>
  <svg style="position:absolute;left:1266px;top:6px" width="10" height="6" viewBox="0 0 10 6"><path d="M0 0 H9 L4.5 5 Z" fill="#888"/></svg>
</div>
<div id="taskbar">
  <div style="position:absolute;left:0;top:0;width:97px;height:30px;border-radius:0 12px 12px 0;background:linear-gradient(#5cc85c 0%,#3ab03a 15%,#2c9e2c 50%,#1e941e 85%,#3aa83a 100%);box-shadow:1px 0 2px rgba(0,0,0,.4)"></div>
  <svg style="position:absolute;left:10px;top:5px" width="20" height="20" viewBox="0 0 20 20"><path d="M2 3 Q5 1 9 3 L8 9 Q5 7 1 9 Z" fill="#f05020"/><path d="M10 3 Q14 5 18 3 L17 9 Q13 11 9 9 Z" fill="#60c030"/><path d="M1 10 Q5 8 8 10 L7 16 Q4 14 0 16 Z" fill="#2080f0"/><path d="M9 10 Q13 12 17 10 L16 16 Q12 18 8 16 Z" fill="#f8c020"/></svg>
  <span style="position:absolute;left:35px;top:5px;font-size:16px;line-height:18px;font-weight:bold;font-style:italic;color:#fff;text-shadow:1px 1px 1px #1a5a1a">пуск</span>
  <div class="task" style="top:4px"><svg style="position:absolute;left:10px;top:3px" width="15" height="16" viewBox="0 0 15 16"><ellipse cx="7.5" cy="8" rx="6.5" ry="7.5" fill="#e01010"/><ellipse cx="7.5" cy="8" rx="2.6" ry="5.5" fill="#1e48a8"/></svg><span style="position:absolute;left:28px;top:4px;font-size:11.3px;line-height:13px;color:#fff;white-space:nowrap">Международный аэ...</span></div>
  <span style="position:absolute;left:1132px;top:7px;width:16px;height:14px;font-size:11px;line-height:14px;color:#fff;background:#3a6acc;text-align:center;letter-spacing:-.5px">RU</span>
  <div style="position:absolute;left:1169px;top:1px;width:111px;height:29px;background:linear-gradient(#f4faff 0%,#d8ecfc 20%,#b4d6f8 55%,#90c0f4 100%);border-left:1px solid #5a9ae8"></div>
  <svg style="position:absolute;left:1160px;top:6px" width="18" height="18" viewBox="0 0 18 18"><circle cx="9" cy="9" r="8" fill="#dde8f8" stroke="#5a8ad8"/><path d="M11 5 L7 9 L11 13" stroke="#2a4a90" stroke-width="2" fill="none"/></svg>
  <svg style="position:absolute;left:1181px;top:7px" width="18" height="16" viewBox="0 0 18 16"><rect x="1" y="4" width="9" height="8" fill="#9a9a8a" stroke="#555"/><rect x="6" y="1" width="10" height="8" fill="#7a7a70" stroke="#444"/></svg>
  <svg style="position:absolute;left:1199px;top:6px" width="18" height="18" viewBox="0 0 18 18"><circle cx="9" cy="9" r="8" fill="#1a4a9a"/><text x="5" y="14" font-family="Liberation Sans" font-size="13" font-weight="bold" fill="#fff">a</text></svg>
  <div style="position:absolute;left:1216px;top:7px;width:16px;height:16px;background:#00107a"><span style="position:absolute;left:1px;top:1px;font-size:12px;line-height:14px;color:#fff">Ru</span></div>
  <span style="position:absolute;left:1239px;top:8px;font-size:11px;line-height:14px;color:#0a0a20">19:07</span>
</div>

</body></html>
